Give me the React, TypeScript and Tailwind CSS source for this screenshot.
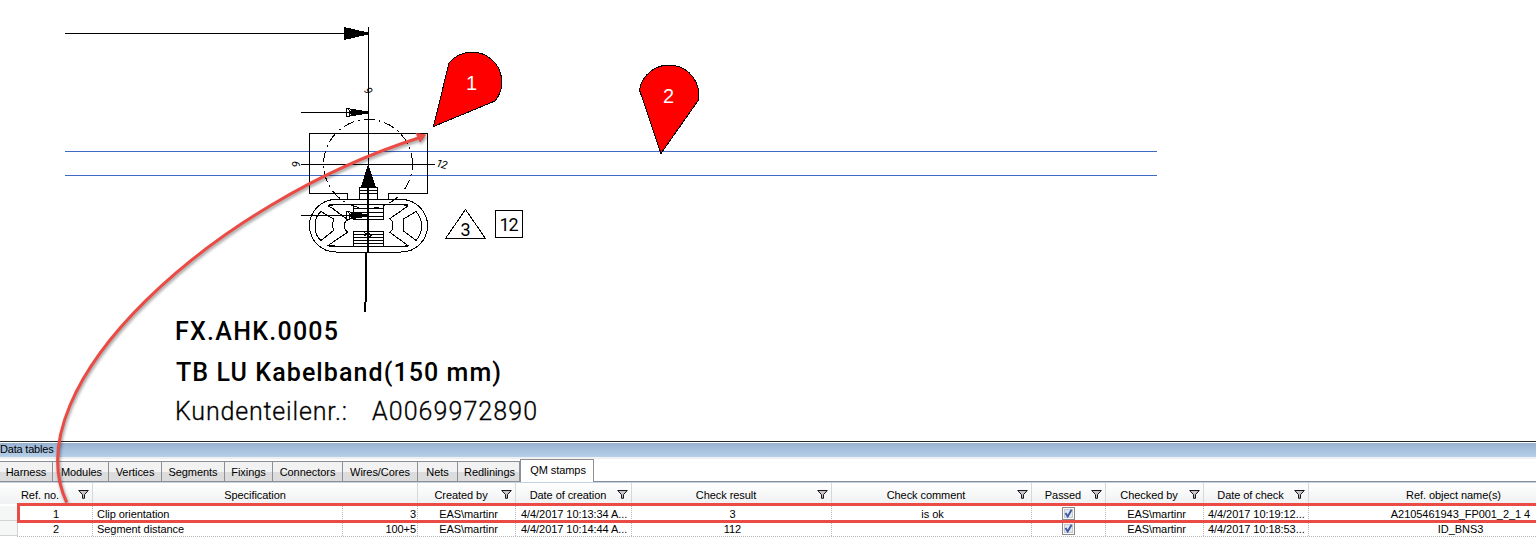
import React from "react";

const gridCols =
  "grid grid-cols-[18px_75px_250px_75px_98px_116px_200px_200px_74px_98px_105px_304px]";

const tabs = [
  { label: "Harness", cls: "w-[53px]" },
  { label: "Modules", cls: "w-[56px] pl-[2px]" },
  { label: "Vertices", cls: "w-[53px]" },
  { label: "Segments", cls: "w-[63px]" },
  { label: "Fixings", cls: "w-[48px]" },
  { label: "Connectors", cls: "w-[70px]" },
  { label: "Wires/Cores", cls: "w-[75px]" },
  { label: "Nets", cls: "w-[40px]" },
  { label: "Redlinings", cls: "w-[62px] pl-[2px]" },
];

const rows = [
  {
    id: "1", spec: "Clip orientation", value: "3", by: "EAS\\martinr", created: "4/4/2017 10:13:34 A...",
    result: "3", comment: "is ok", checker: "EAS\\martinr", checked: "4/4/2017 10:19:12...", ref: "A2105461943_FP001_2_1 4",
  },
  {
    id: "2", spec: "Segment distance", value: "100+5", by: "EAS\\martinr", created: "4/4/2017 10:14:44 A...",
    result: "112", comment: "", checker: "EAS\\martinr", checked: "4/4/2017 10:18:53...", ref: "ID_BNS3",
  },
];

function Funnel() {
  return (
    <svg width="11" height="9" viewBox="0 0 11 9" className="shrink-0">
      <path d="M0.7 0.5H10.3L6.5 4.6V8.3H4.5V4.6Z" fill="#c9c3cc" stroke="#171317" strokeWidth="1" />
    </svg>
  );
}

function Head({ label, cls = "pl-[3px] pr-[3px]", filter = true }: { label: string; cls?: string; filter?: boolean }) {
  return (
    <div className={`flex h-[20px] items-center border-r border-[#d3dadb] pt-[3px] ${cls}`}>
      <span className="flex-1 whitespace-nowrap text-center">{label}</span>
      {filter && <Funnel />}
    </div>
  );
}

function Cell({ children, cls = "" }: { children?: React.ReactNode; cls?: string }) {
  return (
    <div className={`flex items-center overflow-hidden border-r border-dotted border-[#b8b8b8] ${cls}`}>{children}</div>
  );
}

function Check() {
  return (
    <svg width="13" height="13" viewBox="0 0 13 13">
      <rect x="0.5" y="0.5" width="12" height="12" fill="#f8f8f8" stroke="#8b8b8b" />
      <rect x="2.5" y="2.5" width="8" height="8" fill="#e4e8ee" stroke="#c4cad3" />
      <path d="M3.5 6L5.7 9.4L9.6 2.8" fill="none" stroke="#3e57a2" strokeWidth="1.9" />
    </svg>
  );
}

function Drawing() {
  return (
    <svg width="1536" height="441" viewBox="0 0 1536 441" className="block shrink-0" fill="none" stroke="#000" shapeRendering="crispEdges">
      <path d="M65 151.5H1157M65 175.5H1157" stroke="#4169c6" />
      <path d="M65 33.5H345M368.5 27V164M301 112.5H368M301 164.5H435M301 215.5H368" />
      <path d="M344 27V40L368 34.5V32.5Z" fill="#000" stroke="none" />
      <path d="M346.5 108.5V116.5L368 113V112ZM348.5 109L352.5 116M352 110L349 115M346.5 211.5V219.5L368 216V215ZM348.5 212L352.5 219M352 213L349 218" />
      <path d="M352 109.5L368 112.5L352 115.5ZM352 212.5L368 215.5L352 218.5Z" fill="#000" stroke="none" />
      <circle cx="368" cy="164" r="44.5" strokeDasharray="11 4 2 4" strokeDashoffset="5" />
      <path d="M347.5 199V193.5H309.5V133.5H427.5V193.5H388.5V199" />
      <path d="M359.5 199V187.5H377.5V199M359.5 190.5H377.5M359.5 193.5H377.5" />
      <path d="M368 164L361 187H376Z" fill="#000" stroke="none" />
      <rect x="309.5" y="199.5" width="118" height="52.5" rx="26.25" />
      <path d="M329 204.5H408M329 246.5H408" />
      <path d="M328 206L332 208L346 218.5L348 220Q344 221.5 344.5 226Q344 230 348 232L328 245.5L335 246" />
      <path d="M328 206L335 204.5M408 206L402 204.5M408 206L390 218.5L392 221V230L390 232.5L408 245.5L402 246.5" />
      <path d="M321 211.5L333.5 219L332.5 225L333.5 230.5L321 240.5Q315 236 315 226Q315 216 321 211.5Z" />
      <path d="M416 211.5L403.5 219V231L416 240.5Q421.5 235 421.5 226Q421.5 217 416 211.5Z" />
      <path d="M353.5 204.5H383.5V219.5H353.5ZM353.5 208.5H383.5M353.5 212.5H383.5M353.5 216.5H383.5" />
      <path d="M353.5 231.5H383.5V246.5H353.5ZM353.5 234.5H383.5M353.5 237.5H383.5M353.5 240.5H383.5M353.5 243.5H383.5" />
      <path d="M368 187V253" strokeWidth="2" />
      <path d="M366 252V302M365 302V312" strokeWidth="2" />
      <path d="M364 232L369 237M364 236Q367 232 371 235Q371 238 367 237" strokeWidth="1.4" />
      <path d="M465.5 209.5L445.5 238.5H485.5Z" />
      <rect x="495.5" y="210.5" width="27" height="27" />

      <path d="M433.5 126.5L449 63A29.8 29.8 0 1 1 495 101Z" fill="#f00" />
      <path d="M661 153.5L639.5 90A29.9 29.9 0 1 1 698.5 100Z" fill="#f00" />

      <g fill="#000" stroke="none" shapeRendering="auto" fontFamily="Roboto, sans-serif">
        <text x="465.5" y="235.5" fontSize="18" textAnchor="middle">3</text>
        <text x="499.5" y="231" fontSize="18" textLength="19">12</text>
        <text transform="translate(291.5 161) rotate(90)" fontSize="11" fontStyle="italic">6</text>
        <text transform="translate(363.5 90) rotate(60)" fontSize="11" fontStyle="italic">9</text>
        <text transform="translate(435.5 166.5) rotate(14)" fontSize="11" fontStyle="italic" textLength="11">12</text>
        <text x="175" y="340" fontSize="25" fontWeight="500" textLength="163">FX.AHK.0005</text>
        <text x="176" y="381" fontSize="25" fontWeight="500" textLength="325">TB LU Kabelband(150 mm)</text>
        <g stroke="#000" strokeWidth="0.3" fontSize="25" fontWeight="300">
          <text x="175" y="419.5" textLength="172">Kundenteilenr.:</text>
          <text x="372" y="419.5" textLength="165">A0069972890</text>
        </g>
      </g>
      <g fill="#fff" stroke="none" fontSize="20" textAnchor="middle" fontFamily="Liberation Sans, Arial, sans-serif">
        <text x="471.5" y="90">1</text>
        <text x="668.5" y="103">2</text>
      </g>
    </svg>
  );
}

function Callout() {
  return (
    <svg width="1536" height="550" viewBox="0 0 1536 550" className="pointer-events-none absolute left-0 top-0">
      <g className="drop-shadow-[1px_2px_1.5px_rgba(0,0,0,0.4)]">
        <path d="M66.7 502.5C12 385 216 202 420 137.5" fill="none" stroke="#ea4b45" strokeWidth="3" />
        <path d="M426.5 134.5L415.5 133L420 142.5Z" fill="#ea4b45" />
      </g>
      <path d="M1540 504.5H18.5V521.5H1540" fill="none" stroke="#ea4b45" strokeWidth="3" />
    </svg>
  );
}

export default function App() {
  return (
    <div className="relative flex h-[550px] w-[1536px] flex-col overflow-hidden bg-white font-['Liberation_Sans',Arial,sans-serif] text-[11px] leading-[14px] tracking-[-0.06px] text-black">
      <Drawing />
      <div className="h-px shrink-0 bg-[#262c2d]" />
      <div className="mt-px flex h-[14px] shrink-0 items-center bg-linear-to-b from-[#98b2d1] to-[#b6d0eb] pb-[2px] tracking-[-0.2px]">Data tables</div>
      <div className="h-[2px] shrink-0 bg-[#f0f0f0]" />
      <div className="flex h-[23px] shrink-0 items-end">
        {tabs.map((t) => (
          <div
            key={t.label}
            className={`flex h-[21px] shrink-0 items-center justify-center whitespace-nowrap border-b border-r border-t border-[#8c8e98] bg-linear-to-b from-[#f2f2f2] from-50% to-[#dcdcdc] to-50% ${t.cls}`}
          >
            {t.label}
          </div>
        ))}
        <div className="flex h-[23px] w-[74px] items-center justify-center border-l border-r border-t border-[#8c8e98] bg-white pb-[3px] pl-[2px]">QM stamps</div>
        <div className="h-px flex-1 bg-[#858d9c]" />
      </div>
      <div className="h-px shrink-0 bg-[#c5d2e1]" />
      <div className="grid h-[21px] w-[1613px] shrink-0 grid-cols-[18px_75px_325px_98px_116px_200px_200px_74px_98px_105px_304px] bg-linear-to-b from-white to-[#f0f1f2]">
        <div />
        <Head label="Ref. no." cls="pr-[3px] -ml-[18px] pl-[18px] [&>span]:pr-[16px]" />
        <Head label="Specification" filter={false} />
        <Head label="Created by" />
        <Head label="Date of creation" />
        <Head label="Check result" />
        <Head label="Check comment" />
        <Head label="Passed" />
        <Head label="Checked by" />
        <Head label="Date of check" />
        <Head label="Ref. object name(s)" cls="pr-[3px]" />
      </div>
      <div className="h-[2px] shrink-0" />
      {rows.map((r) => (
        <div key={r.id} className={`h-[15px] w-[1613px] shrink-0 whitespace-nowrap ${gridCols}`}>
          <div className="border-b border-r border-[#cfd5d5] bg-[#f5f6f6]" />
          <Cell cls="justify-center pl-[2px]">{r.id}</Cell>
          <Cell cls="pl-[4px]">{r.spec}</Cell>
          <Cell cls="justify-end pr-px">{r.value}</Cell>
          <Cell cls="justify-center pl-[4px]">{r.by}</Cell>
          <Cell cls="pl-[5px]">{r.created}</Cell>
          <Cell cls="justify-center pl-[2px]">{r.result}</Cell>
          <Cell cls="justify-center pl-[2px]">{r.comment}</Cell>
          <Cell cls="justify-center"><Check /></Cell>
          <Cell cls="justify-center pl-[4px]">{r.checker}</Cell>
          <Cell cls="pl-[4px]">{r.checked}</Cell>
          <Cell cls="justify-center">{r.ref}</Cell>
        </div>
      ))}
      <div className="ml-[17px] border-t border-dotted border-[#b8b8b8]" />
      <Callout />
    </div>
  );
}
